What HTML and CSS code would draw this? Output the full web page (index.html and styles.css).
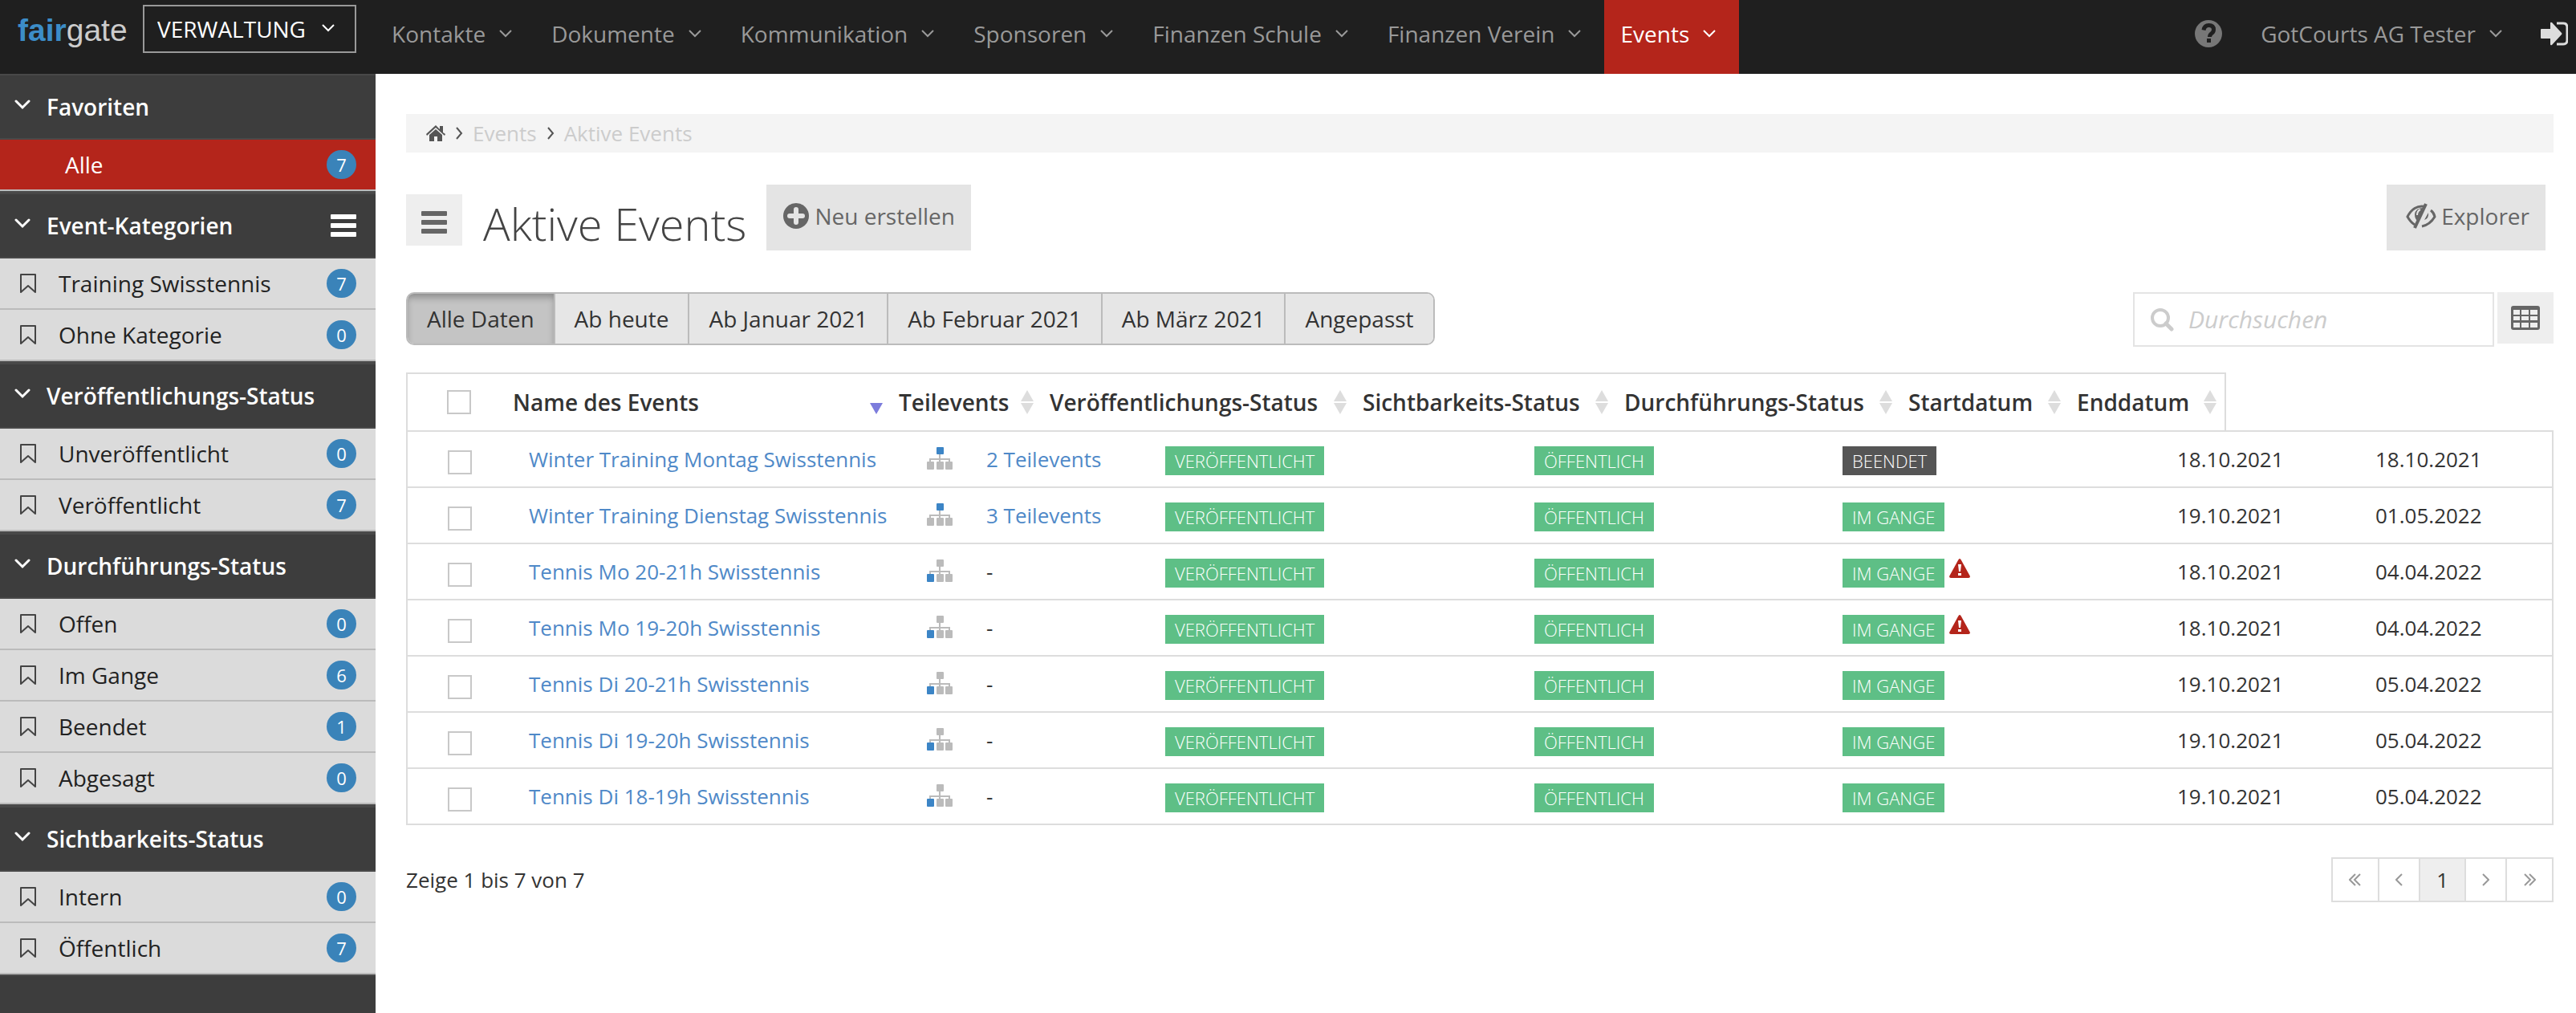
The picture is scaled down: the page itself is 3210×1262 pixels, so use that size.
FILE: index.html
```html
<!DOCTYPE html>
<html lang="de">
    <head>
        <meta charset="UTF-8" />
        <meta name="viewport" content="width=device-width, initial-scale=1.0" />
        <title>Aktive Events</title>
        <link rel="stylesheet" href="styles.css">
    </head>
    <body>
        <svg class="sprite" aria-hidden="true">
            <symbol id="i-down" viewBox="0 0 18 12"><path d="M2 2l7 7 7-7" fill="none" stroke="currentColor" stroke-width="2" /></symbol>
            <symbol id="i-down-bold" viewBox="0 0 20 14"><path d="M2 3l8 8 8-8" fill="none" stroke="currentColor" stroke-width="3" stroke-linecap="round" /></symbol>
            <symbol id="i-right" viewBox="0 0 10 16"><path d="M2 1l6 7-6 7" fill="none" stroke="currentColor" stroke-width="2" /></symbol>
            <symbol id="i-bookmark" viewBox="0 0 22 26"><path d="M2 2h18v22l-9-8-9 8z" fill="none" stroke="currentColor" stroke-width="2" stroke-linejoin="round" /></symbol>
            <symbol id="i-bars" viewBox="0 0 32 28"><path d="M1 0h30q1 0 1 1v4q0 1-1 1H1q-1 0-1-1V1q0-1 1-1zM1 11h30q1 0 1 1v4q0 1-1 1H1q-1 0-1-1v-4q0-1 1-1zM1 22h30q1 0 1 1v4q0 1-1 1H1q-1 0-1-1v-4q0-1 1-1z" fill="currentColor" /></symbol>
            <symbol id="i-tree" viewBox="0 0 32 28">
                <path d="M16 8v12M4 20v-5h24v5" fill="none" stroke="#bbb" stroke-width="2" />
                <rect class="tree-top" x="12" y="0" width="9" height="9" rx="1" />
                <rect class="tree-leaf" x="0" y="18" width="9" height="10" rx="1" />
                <rect x="12" y="18" width="9" height="10" rx="1" fill="#bbb" />
                <rect x="23" y="18" width="9" height="10" rx="1" fill="#bbb" />
            </symbol>
            <symbol id="i-sort" viewBox="0 0 16 32"><path class="sort-up" d="M8 1l8 14H0z" /><path class="sort-down" d="M0 17h16L8 31z" /></symbol>
            <symbol id="i-warn" viewBox="0 0 26 24"><path d="M13 0q1 0 2 2l11 20q0 2-2 2H2q-2 0-2-2L11 2q1-2 2-2z" fill="#b4251b" /><path d="M11 7h4l-1 9h-2zM11 18h4v3h-4z" fill="#fff" /></symbol>
        </svg>
        <header class="topbar">
            <a href="#" class="logo"><b>fair</b>gate</a>
            <div class="area">
                <select class="area-select" aria-label="Bereich">
                    <option>VERWALTUNG</option>
                </select>
                <svg class="chevron area-chevron"><use href="#i-down" /></svg>
            </div>
            <nav class="mainnav">
                <a href="#">Kontakte <svg class="chevron"><use href="#i-down" /></svg></a>
                <a href="#">Dokumente <svg class="chevron"><use href="#i-down" /></svg></a>
                <a href="#">Kommunikation <svg class="chevron"><use href="#i-down" /></svg></a>
                <a href="#">Sponsoren <svg class="chevron"><use href="#i-down" /></svg></a>
                <a href="#">Finanzen Schule <svg class="chevron"><use href="#i-down" /></svg></a>
                <a href="#">Finanzen Verein <svg class="chevron"><use href="#i-down" /></svg></a>
                <a href="#" class="active">Events <svg class="chevron"><use href="#i-down" /></svg></a>
            </nav>
            <div class="usernav">
                <a href="#" class="help" aria-label="Hilfe">
                    <svg width="36" height="36" viewBox="0 0 36 36"><circle cx="18" cy="18" r="17" fill="#777" /><path d="M12 13.500q1-6 6.500-6 6 0 6 5.500 0 3-3 5-2 1.500-2 4" fill="none" stroke="#1f1f1f" stroke-width="5" /><rect x="16" y="24" width="5" height="5" fill="#1f1f1f" /></svg>
                </a>
                <a href="#" class="user">GotCourts AG Tester <svg class="chevron"><use href="#i-down" /></svg></a>
                <a href="#" class="logout" aria-label="Abmelden">
                    <svg width="34" height="30" viewBox="0 0 34 30"><path d="M1 9h11V2q0-2 2-1l12 13q1 1 0 2L14 29q-2 1-2-1v-7H1q-1 0-1-1V10q0-1 1-1z" fill="#ddd" /><path d="M20 2h8q5 0 5 5v16q0 5-5 5h-8" fill="none" stroke="#ddd" stroke-width="3" /></svg>
                </a>
            </div>
        </header>
        <div class="page">
            <aside class="sidebar">
                <section>
                    <h2><svg class="fold"><use href="#i-down-bold" /></svg>Favoriten</h2>
                    <ul>
                        <li class="active"><a href="#">Alle <span class="count">7</span></a></li>
                    </ul>
                </section>
                <section>
                    <h2><svg class="fold"><use href="#i-down-bold" /></svg>Event-Kategorien
                        <button class="sort-button" aria-label="Sortieren"><svg class="bars"><use href="#i-bars" /></svg></button>
                    </h2>
                    <ul>
                        <li><a href="#"><svg><use href="#i-bookmark" /></svg>Training Swisstennis <span class="count">7</span></a></li>
                        <li><a href="#"><svg><use href="#i-bookmark" /></svg>Ohne Kategorie <span class="count">0</span></a></li>
                    </ul>
                </section>
                <section>
                    <h2><svg class="fold"><use href="#i-down-bold" /></svg>Veröffentlichungs-Status</h2>
                    <ul>
                        <li><a href="#"><svg><use href="#i-bookmark" /></svg>Unveröffentlicht <span class="count">0</span></a></li>
                        <li><a href="#"><svg><use href="#i-bookmark" /></svg>Veröffentlicht <span class="count">7</span></a></li>
                    </ul>
                </section>
                <section>
                    <h2><svg class="fold"><use href="#i-down-bold" /></svg>Durchführungs-Status</h2>
                    <ul>
                        <li><a href="#"><svg><use href="#i-bookmark" /></svg>Offen <span class="count">0</span></a></li>
                        <li><a href="#"><svg><use href="#i-bookmark" /></svg>Im Gange <span class="count">6</span></a></li>
                        <li><a href="#"><svg><use href="#i-bookmark" /></svg>Beendet <span class="count">1</span></a></li>
                        <li><a href="#"><svg><use href="#i-bookmark" /></svg>Abgesagt <span class="count">0</span></a></li>
                    </ul>
                </section>
                <section>
                    <h2><svg class="fold"><use href="#i-down-bold" /></svg>Sichtbarkeits-Status</h2>
                    <ul>
                        <li><a href="#"><svg><use href="#i-bookmark" /></svg>Intern <span class="count">0</span></a></li>
                        <li><a href="#"><svg><use href="#i-bookmark" /></svg>Öffentlich <span class="count">7</span></a></li>
                    </ul>
                </section>
            </aside>
            <main>
                <nav class="breadcrumb">
                    <a href="#" aria-label="Home">
                        <svg width="24" height="20" viewBox="0 0 24 20"><path d="M12 0l5 5V1h4v8l3 2-1 2L12 3 1 13l-1-2z" fill="#555" /><path d="M12 5l8 7v8h-6v-6h-4v6H4v-8z" fill="#555" /></svg>
                    </a>
                    <svg class="sep"><use href="#i-right" /></svg>
                    <a href="#">Events</a>
                    <svg class="sep"><use href="#i-right" /></svg>
                    <span>Aktive Events</span>
                </nav>
                <div class="title-row">
                    <button class="menu-button" aria-label="Menü"><svg class="bars"><use href="#i-bars" /></svg></button>
                    <h1>Aktive Events</h1>
                    <button class="big-button">
                        <svg width="34" height="34" viewBox="0 0 34 34"><circle cx="17" cy="17" r="16" fill="#666" /><path d="M17 9v16M9 17h16" stroke="#e4e4e4" stroke-width="6" stroke-linecap="round" /></svg>
                        Neu erstellen
                    </button>
                    <button class="big-button explorer">
                        <svg width="38" height="34" viewBox="0 0 38 34"><path d="M26 6C14 2 6 10 2 18q4 7 9 10M31 10q4 3 5 8-6 10-16 12" fill="none" stroke="#666" stroke-width="3" /><path d="M24 7q-12-1-13 8 0 6 4 9zM28 13q1 7-5 9z" fill="#666" /><path d="M18 9q-4 2-4 7" fill="none" stroke="#e4e4e4" stroke-width="2" /><path d="M28 3L14 33" stroke="#e4e4e4" stroke-width="4" /><path d="M25 2L11 32" stroke="#666" stroke-width="4" /></svg>
                        Explorer
                    </button>
                </div>
                <div class="filter-row">
                    <div class="tabs">
                        <button class="active">Alle Daten</button>
                        <button>Ab heute</button>
                        <button>Ab Januar 2021</button>
                        <button>Ab Februar 2021</button>
                        <button>Ab März 2021</button>
                        <button>Angepasst</button>
                    </div>
                    <form class="search">
                        <label for="search"><svg width="30" height="30" viewBox="0 0 30 30"><circle cx="13" cy="13" r="10" fill="none" stroke="#ccc" stroke-width="4" /><path d="M20 20l7 7" stroke="#ccc" stroke-width="5" stroke-linecap="round" /></svg></label>
                        <input type="text" id="search" placeholder="Durchsuchen" aria-label="Durchsuchen" />
                    </form>
                    <button class="grid-button" aria-label="Spalten">
                        <svg width="36" height="30" viewBox="0 0 36 30"><path fill-rule="evenodd" d="M3 0h30q3 0 3 3v24q0 3-3 3H3q-3 0-3-3V3q0-3 3-3zM3 5v6h8V5zm10 0v6h9V5zm11 0v6h9V5zM3 13v5h8v-5zm10 0v5h9v-5zm11 0v5h9v-5zM3 21v6h8v-6zm10 0v6h9v-6zm11 0v6h9v-6z" fill="#666" /></svg>
                    </button>
                </div>
                <table class="head-table">
                    <colgroup>
                        <col class="h-check" /><col class="h-name" /><col class="h-sub" /><col class="h-publish" /><col class="h-visible" /><col class="h-run" /><col class="h-start" /><col class="h-end" />
                    </colgroup>
                    <thead>
                        <tr>
                            <th><input type="checkbox" aria-label="Alle auswählen" /></th>
                            <th><div>Name des Events <svg class="sort desc"><use href="#i-sort" /></svg></div></th>
                            <th><div>Teilevents <svg class="sort"><use href="#i-sort" /></svg></div></th>
                            <th><div>Veröffentlichungs-Status <svg class="sort"><use href="#i-sort" /></svg></div></th>
                            <th><div>Sichtbarkeits-Status <svg class="sort"><use href="#i-sort" /></svg></div></th>
                            <th><div>Durchführungs-Status <svg class="sort"><use href="#i-sort" /></svg></div></th>
                            <th><div>Startdatum <svg class="sort"><use href="#i-sort" /></svg></div></th>
                            <th><div>Enddatum <svg class="sort"><use href="#i-sort" /></svg></div></th>
                        </tr>
                    </thead>
                </table>
                <table class="body-table">
                    <colgroup>
                        <col class="b-check" /><col class="b-name" /><col class="b-sub" /><col class="b-publish" /><col class="b-visible" /><col class="b-run" /><col class="b-start" /><col class="b-end" />
                    </colgroup>
                    <tbody>
                        <tr>
                            <td><input type="checkbox" aria-label="Winter Training Montag Swisstennis" /></td>
                            <td><a href="#">Winter Training Montag Swisstennis</a></td>
                            <td><svg class="tree parent"><use href="#i-tree" /></svg><a href="#">2 Teilevents</a></td>
                            <td><span class="label">VERÖFFENTLICHT</span></td>
                            <td><span class="label">ÖFFENTLICH</span></td>
                            <td><span class="label done">BEENDET</span></td>
                            <td>18.10.2021</td>
                            <td>18.10.2021</td>
                        </tr>
                        <tr>
                            <td><input type="checkbox" aria-label="Winter Training Dienstag Swisstennis" /></td>
                            <td><a href="#">Winter Training Dienstag Swisstennis</a></td>
                            <td><svg class="tree parent"><use href="#i-tree" /></svg><a href="#">3 Teilevents</a></td>
                            <td><span class="label">VERÖFFENTLICHT</span></td>
                            <td><span class="label">ÖFFENTLICH</span></td>
                            <td><span class="label">IM GANGE</span></td>
                            <td>19.10.2021</td>
                            <td>01.05.2022</td>
                        </tr>
                        <tr>
                            <td><input type="checkbox" aria-label="Tennis Mo 20-21h Swisstennis" /></td>
                            <td><a href="#">Tennis Mo 20-21h Swisstennis</a></td>
                            <td><svg class="tree"><use href="#i-tree" /></svg>-</td>
                            <td><span class="label">VERÖFFENTLICHT</span></td>
                            <td><span class="label">ÖFFENTLICH</span></td>
                            <td><span class="label">IM GANGE</span><svg class="warn"><use href="#i-warn" /></svg></td>
                            <td>18.10.2021</td>
                            <td>04.04.2022</td>
                        </tr>
                        <tr>
                            <td><input type="checkbox" aria-label="Tennis Mo 19-20h Swisstennis" /></td>
                            <td><a href="#">Tennis Mo 19-20h Swisstennis</a></td>
                            <td><svg class="tree"><use href="#i-tree" /></svg>-</td>
                            <td><span class="label">VERÖFFENTLICHT</span></td>
                            <td><span class="label">ÖFFENTLICH</span></td>
                            <td><span class="label">IM GANGE</span><svg class="warn"><use href="#i-warn" /></svg></td>
                            <td>18.10.2021</td>
                            <td>04.04.2022</td>
                        </tr>
                        <tr>
                            <td><input type="checkbox" aria-label="Tennis Di 20-21h Swisstennis" /></td>
                            <td><a href="#">Tennis Di 20-21h Swisstennis</a></td>
                            <td><svg class="tree"><use href="#i-tree" /></svg>-</td>
                            <td><span class="label">VERÖFFENTLICHT</span></td>
                            <td><span class="label">ÖFFENTLICH</span></td>
                            <td><span class="label">IM GANGE</span></td>
                            <td>19.10.2021</td>
                            <td>05.04.2022</td>
                        </tr>
                        <tr>
                            <td><input type="checkbox" aria-label="Tennis Di 19-20h Swisstennis" /></td>
                            <td><a href="#">Tennis Di 19-20h Swisstennis</a></td>
                            <td><svg class="tree"><use href="#i-tree" /></svg>-</td>
                            <td><span class="label">VERÖFFENTLICHT</span></td>
                            <td><span class="label">ÖFFENTLICH</span></td>
                            <td><span class="label">IM GANGE</span></td>
                            <td>19.10.2021</td>
                            <td>05.04.2022</td>
                        </tr>
                        <tr>
                            <td><input type="checkbox" aria-label="Tennis Di 18-19h Swisstennis" /></td>
                            <td><a href="#">Tennis Di 18-19h Swisstennis</a></td>
                            <td><svg class="tree"><use href="#i-tree" /></svg>-</td>
                            <td><span class="label">VERÖFFENTLICHT</span></td>
                            <td><span class="label">ÖFFENTLICH</span></td>
                            <td><span class="label">IM GANGE</span></td>
                            <td>19.10.2021</td>
                            <td>05.04.2022</td>
                        </tr>
                    </tbody>
                </table>
                <div class="table-footer">
                    <span>Zeige 1 bis 7 von 7</span>
                    <nav class="pagination">
                        <a href="#" aria-label="Erste Seite"><svg width="16" height="16" viewBox="0 0 16 16"><path d="M8 1L1 8l7 7M14 1L7 8l7 7" /></svg></a>
                        <a href="#" aria-label="Zurück"><svg width="9" height="16" viewBox="0 0 9 16"><path d="M8 1L1 8l7 7" /></svg></a>
                        <a href="#" class="active">1</a>
                        <a href="#" aria-label="Weiter"><svg width="9" height="16" viewBox="0 0 9 16"><path d="M1 1l7 7-7 7" /></svg></a>
                        <a href="#" aria-label="Letzte Seite"><svg width="16" height="16" viewBox="0 0 16 16"><path d="M2 1l7 7-7 7M8 1l7 7-7 7" /></svg></a>
                    </nav>
                </div>
            </main>
        </div>
    </body>
</html>
```
FILE: styles.css
```css
* {
    box-sizing: border-box;
}
body {
    display: flex;
    flex-direction: column;
    min-height: 100vh;
    margin: 0;
    background-color: #fff;
    color: #333;
    font-family: "Open Sans", sans-serif;
    font-size: 26px;
    line-height: 36px;
}
button,
input,
select {
    font: inherit;
    color: inherit;
    border-radius: 0;
}
button {
    border: 0;
    cursor: pointer;
}
a {
    color: #4f89c8;
    text-decoration: none;
}
svg {
    flex: none;
}
.sprite {
    position: absolute;
    width: 0;
    height: 0;
}
.chevron {
    width: 18px;
    height: 12px;
}
.bars {
    display: block;
    width: 32px;
    height: 28px;
}

/* top bar */
.topbar {
    display: flex;
    height: 92px;
    background-color: #1f1f1f;
    color: #999;
    font-size: 28px;
}
.topbar a {
    color: #999;
}
.topbar .logo {
    width: 178px;
    padding: 18px 0 0 22px;
    color: #ccc;
    font-family: "Liberation Sans", Arial, sans-serif;
    font-size: 39px;
    line-height: 40px;
}
.logo b {
    color: #3c8dc8;
}
.area {
    position: relative;
    width: 266px;
    height: 60px;
    margin-top: 6px;
}
.area-select {
    appearance: none;
    width: 100%;
    height: 100%;
    padding: 0 16px;
    border: 2px solid #999;
    background-color: transparent;
    color: #fff;
}
.area-chevron {
    position: absolute;
    right: 26px;
    top: 23px;
    color: #fff;
    pointer-events: none;
}
.mainnav {
    display: flex;
    margin-left: 24px;
}
.mainnav a {
    display: flex;
    align-items: center;
    gap: 16px;
    padding: 0 28px 8px 20px;
}
.topbar .mainnav .active {
    background-color: #b4251b;
    color: #fff;
}
.usernav {
    display: flex;
    align-items: center;
    margin-left: auto;
    padding: 0 10px 8px 0;
}
.usernav a {
    display: flex;
    align-items: center;
}
.usernav .user {
    gap: 16px;
    margin: 0 47px;
}

/* sidebar */
.page {
    display: flex;
    flex: 1;
}
.sidebar {
    width: 468px;
    background-color: #3d3d3d;
    font-size: 28px;
}
.sidebar section {
    border-bottom: 2px solid #4a4a4a;
}
.sidebar h2 {
    display: flex;
    align-items: center;
    height: 82px;
    margin: 0;
    padding: 0 24px 0 18px;
    border: solid #484848;
    border-width: 2px 0;
    color: #fff;
    font-size: 28px;
    font-weight: 600;
}
.fold {
    width: 20px;
    height: 14px;
    margin: 0 20px 6px 0;
}
.sort-button {
    margin-left: auto;
    padding: 0;
    background: none;
}
.sidebar ul {
    margin: 0;
    padding: 0;
    list-style: none;
}
.sidebar li a {
    display: flex;
    align-items: center;
    height: 64px;
    padding: 0 24px;
    border-bottom: 2px solid #bbb;
    background-color: #dbdbdb;
    color: #222;
}
.sidebar li svg {
    width: 22px;
    height: 26px;
    margin-right: 27px;
    color: #444;
}
.sidebar li.active a {
    padding-left: 81px;
    background-color: #b4251b;
    color: #fff;
}
.count {
    width: 37px;
    height: 36px;
    margin-left: auto;
    border-radius: 18px;
    background-color: #3a83b9;
    color: #fff;
    font-size: 22px;
    text-align: center;
}

/* content */
main {
    flex: 1;
    padding: 50px 28px 0 38px;
}
.breadcrumb {
    display: flex;
    align-items: center;
    gap: 12px;
    height: 48px;
    padding: 0 25px;
    background-color: #f4f4f4;
    color: #ccc;
}
.breadcrumb a {
    color: #ccc;
}
.breadcrumb a:first-child {
    display: flex;
}
.sep {
    width: 10px;
    height: 16px;
    color: #555;
}
.title-row {
    display: flex;
    height: 82px;
    margin-top: 40px;
}
.menu-button {
    width: 70px;
    height: 64px;
    margin-top: 12px;
    padding: 6px 19px 0;
    background-color: #eee;
    color: #666;
}
h1 {
    margin: 8px 25px 0 26px;
    color: #444;
    font-size: 56px;
    font-weight: 300;
    line-height: 80px;
}
.big-button {
    display: flex;
    align-items: center;
    gap: 6px;
    padding: 0 20px 4px;
    background-color: #e4e4e4;
    color: #666;
    font-size: 28px;
}
.big-button.explorer {
    margin: 0 10px 0 auto;
    padding-left: 24px;
}
.filter-row {
    display: flex;
    align-items: flex-start;
    margin-top: 52px;
}
.tabs {
    display: flex;
    overflow: hidden;
    height: 66px;
    border: 2px solid #bbb;
    border-radius: 10px;
    font-size: 28px;
}
.tabs button {
    padding: 0 24px;
    border-right: 2px solid #bbb;
    background-color: #e6e6e6;
    color: #333;
}
.tabs button:last-child {
    border-right: 0;
}
.tabs .active {
    background-color: #c4c4c4;
    box-shadow: inset 0 6px 10px -2px #888;
}
.search {
    display: flex;
    align-items: center;
    width: 450px;
    height: 68px;
    margin: 0 4px 0 auto;
    padding-left: 19px;
    border: 2px solid #e4e4e4;
}
.search label {
    display: flex;
}
.search input {
    flex: 1;
    min-width: 0;
    padding: 0 18px;
    border: 0;
    outline: none;
    font-size: 30px;
}
.search input::placeholder {
    color: #ccc;
    font-style: italic;
}
.grid-button {
    display: flex;
    align-items: center;
    justify-content: center;
    width: 70px;
    height: 64px;
    padding: 0;
    background-color: #eee;
}

/* tables: the header keeps its own width, the rows fill the page */
table {
    border-collapse: separate;
    border-spacing: 0;
    table-layout: fixed;
}
input[type="checkbox"] {
    appearance: none;
    display: block;
    width: 30px;
    height: 30px;
    margin: 0;
    border: 2px solid #c8c8c8;
    background-color: #fff;
}
.head-table {
    width: 2268px;
    margin-top: 32px;
    border: solid #ddd;
    border-width: 2px 2px 0;
}
.head-table th {
    height: 70px;
    padding: 0 10px;
    font-size: 28px;
    font-weight: 600;
    text-align: left;
    white-space: nowrap;
}
.head-table th:first-child {
    padding-left: 49px;
}
.head-table th div {
    display: flex;
    align-items: center;
    justify-content: space-between;
}
.h-check { width: 121px; }
.h-name { width: 481px; }
.h-sub { width: 188px; }
.h-publish { width: 390px; }
.h-visible { width: 326px; }
.h-run { width: 354px; }
.h-start { width: 210px; }
.h-end { width: 194px; }
.sort {
    width: 16px;
    height: 32px;
    fill: #ddd;
}
.sort.desc {
    fill: #7c7cdc;
    clip-path: inset(16px 0 0 0);
}
.body-table {
    width: 100%;
    border: solid #ddd;
    border-width: 2px 2px 0;
}
.body-table td {
    height: 70px;
    padding: 0 20px;
    border-bottom: 2px solid #ddd;
    white-space: nowrap;
}
.body-table td:first-child {
    padding: 8px 0 0 50px;
}
.b-check { width: 131px; }
.b-name { width: 496px; }
.b-sub { width: 297px; }
.b-publish { width: 460px; }
.b-visible { width: 384px; }
.b-run { width: 417px; }
.b-start { width: 247px; }
.tree {
    width: 32px;
    height: 28px;
    margin-right: 42px;
    vertical-align: -3px;
    --top: #bbb;
    --leaf: #3c85c6;
}
.tree.parent {
    --top: #3c85c6;
    --leaf: #bbb;
}
.tree-top {
    fill: var(--top);
}
.tree-leaf {
    fill: var(--leaf);
}
.label {
    display: inline-block;
    padding: 0 12px;
    background-color: #5ebf86;
    color: #fff;
    font-size: 22px;
    font-weight: 300;
    vertical-align: middle;
}
.label.done {
    background-color: #555;
}
.warn {
    width: 26px;
    height: 24px;
    margin-left: 6px;
}
.table-footer {
    display: flex;
    align-items: center;
    justify-content: space-between;
    margin-top: 40px;
}
.pagination {
    display: flex;
    border: 2px solid #ddd;
}
.pagination a {
    display: flex;
    align-items: center;
    justify-content: center;
    height: 52px;
    padding: 0 20px;
    border-left: 2px solid #ddd;
    color: #333;
}
.pagination a:first-child {
    border-left: 0;
}
.pagination .active {
    background-color: #eee;
}
.pagination path {
    fill: none;
    stroke: #999;
    stroke-width: 2;
}
```
